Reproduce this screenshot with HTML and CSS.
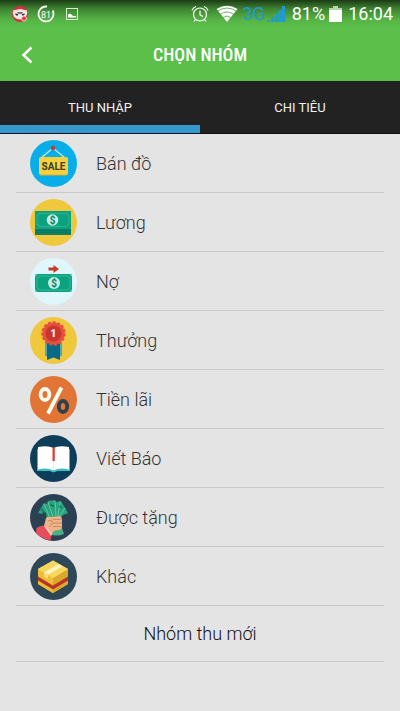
FILE: index.html
```
<!DOCTYPE html>
<html lang="vi">
  <head>
    <meta charset="UTF-8" />
    <meta name="viewport" content="width=device-width, initial-scale=1.0" />
    <title>Chọn nhóm</title>
    <link rel="stylesheet" href="styles.css" />
  </head>
  <body>
    <header class="top">
      <div class="status">
        <div class="status-left">
          <svg width="18" height="18" viewBox="0 0 18 18">
            <circle cx="9" cy="9" r="8" fill="#d5303a" />
            <path d="M1.500 7Q9 3 16.500 7L15 12Q9 17 3 12Z" fill="#f3e9e6" />
            <path d="M2 6Q9 3 16 6" fill="none" stroke="#fff" />
            <path d="M4 8.500l3 .500v1.600H5zM14 8.500l-3 .500v1.600h2z" fill="#333" />
            <path d="M6 7h6l-1 2H7z" fill="#777" />
            <circle cx="13" cy="13.500" r="2.500" fill="#e33d43" stroke="#fff" stroke-width=".7" />
          </svg>
          <svg width="18" height="18" viewBox="0 0 18 18">
            <path d="M6.500 1.900A7.500 7.500 0 1 0 16.500 9L16 5.500" fill="none" stroke="#fff" stroke-width="1.800" />
            <path d="M5 2.600A7.500 7.500 0 0 1 10 1.500" fill="none" stroke="#fff" stroke-width="2" />
            <text x="9" y="12.500" class="small-num" text-anchor="middle">81</text>
          </svg>
          <svg width="18" height="18" viewBox="0 0 18 18">
            <rect x="3.500" y="3.500" width="11" height="11" fill="none" stroke="#d5efcf" />
            <path d="M5 12.500V9.500l2-1 2 1.500 1 1h3v1.500z" fill="#fff" />
          </svg>
        </div>
        <div class="status-right">
          <svg width="18" height="18" viewBox="0 0 18 18" fill="none" stroke="#fff" stroke-width="1.200">
            <circle cx="9" cy="9.500" r="6.500" />
            <path d="M9 5.500v4.500l3 1.500M1 5.500Q2 2.500 5 1.500M17 5.500Q16 2.500 13 1.500M4.500 14.500L3 16.500M13.500 14.500L15 16.500" />
          </svg>
          <svg class="wifi" width="22" height="18" viewBox="0 0 22 18">
            <path d="M11 17L.5 4Q11-2.500 21.500 4Z" fill="#fff" />
            <path d="M1 6.500Q11-.5 21 6.500M4 9.500Q11 4.500 18 9.500M7 12.500Q11 9.500 15 12.500" fill="none" stroke="#4c9f3d" stroke-width=".8" />
          </svg>
          <span class="net">3G</span>
          <svg class="signal" width="18" height="18" viewBox="0 0 18 18" fill="#1e9bd0">
            <path d="M0 15h3v2H0zM4 12h3.500V17H4zM8 8.500h3.200V17H8zM11.600 5h3v12h-3zM15 1h3v16h-3z" />
          </svg>
          <span class="percent">81%</span>
          <svg class="battery" width="13" height="18" viewBox="0 0 13 18">
            <path d="M4 1h5v2h4v2H0V3h4z" fill="#b5d6ad" />
            <path d="M0 5h13v12H0z" fill="#fff" />
          </svg>
          <span>16:04</span>
        </div>
      </div>
      <div class="title-bar">
        <button class="back" type="button" aria-label="Quay lại">
          <svg width="12" height="18" viewBox="0 0 12 18">
            <path d="M10.500 1.500L2.500 9l8 7.500" fill="none" stroke="#fff" stroke-width="2.500" />
          </svg>
        </button>
        <h1>CHỌN NHÓM</h1>
      </div>
    </header>

    <nav class="tabs">
      <button class="tab active" type="button">THU NHẬP</button>
      <button class="tab" type="button">CHI TIÊU</button>
    </nav>

    <main>
      <ul class="groups">
        <li>
          <svg class="icon" viewBox="0 0 47 47">
            <circle cx="23.500" cy="23.500" r="23.500" fill="#08aeea" />
            <path d="M11 18L23 8l12 10" fill="none" stroke="#c9edf5" stroke-width="1.300" />
            <circle cx="23" cy="8" r="2.300" fill="#c0402f" />
            <rect x="9" y="17" width="29" height="18" rx="2" fill="#fad13c" />
            <path d="M10 35h27" stroke="#d5b02e" />
            <text x="23.500" y="30" class="sale" text-anchor="middle">SALE</text>
          </svg>
          <span>Bán đồ</span>
        </li>
        <li>
          <svg class="icon" viewBox="0 0 47 47">
            <circle cx="23.500" cy="23.500" r="23.500" fill="#f0c83e" />
            <rect x="5" y="12" width="36" height="24" fill="#0c8069" />
            <rect x="5" y="12" width="36" height="18" fill="#0ba37f" />
            <path d="M9 14.500h28q0 2 2 2v9q-2 0-2 2H9q0-2-2-2v-9q2 0 2-2z" fill="none" stroke="#38b898" stroke-width=".8" />
            <path d="M5 31.500h36M5 33.500h36" stroke="#0a6d5d" stroke-width=".6" />
            <circle cx="22.500" cy="21" r="5.800" fill="#c4f0e3" />
            <text x="22.500" y="24.500" class="dollar" text-anchor="middle">$</text>
          </svg>
          <span>Lương</span>
        </li>
        <li>
          <svg class="icon" viewBox="0 0 47 47">
            <circle cx="23.500" cy="23.500" r="23.500" fill="#dff6fb" />
            <path d="M18.500 9.500h5V7l5.500 4-5.500 4v-2.500h-5z" fill="#c63a27" />
            <rect x="5" y="16" width="37" height="18" rx="1" fill="#0ba37f" />
            <path d="M9 18h29q0 2 2 2v10q-2 0-2 2H9q0-2-2-2V20q2 0 2-2z" fill="none" stroke="#43bd9e" stroke-width=".8" />
            <path d="M5 19l3-3H5zM42 19l-3-3h3zM5 31l3 3H5zM42 31l-3 3h3z" fill="#6ccab0" />
            <circle cx="24" cy="25" r="6" fill="#c9f0e6" />
            <text x="24" y="28.500" class="dollar" text-anchor="middle">$</text>
          </svg>
          <span>Nợ</span>
        </li>
        <li>
          <svg class="icon" viewBox="0 0 47 47">
            <circle cx="23.500" cy="23.500" r="23.500" fill="#f0c83e" />
            <path d="M15 25h17v14H15z" fill="#56a5b2" />
            <path d="M17 25h13v18l-6.500-2.500L17 43z" fill="#066985" />
            <circle cx="23.500" cy="16.500" r="11" fill="#e8503e" />
            <circle cx="23.500" cy="16.500" r="11" fill="none" stroke="#e8503e" stroke-width="2.500" stroke-dasharray="3 1.600" />
            <circle cx="23.500" cy="16.500" r="8" fill="#c9362f" />
            <text x="23.500" y="20" class="rank" text-anchor="middle">1</text>
          </svg>
          <span>Thưởng</span>
        </li>
        <li>
          <svg class="icon" viewBox="0 0 47 47">
            <circle cx="23.500" cy="23.500" r="23.500" fill="#e07535" />
            <g fill="none" stroke-width="3.800">
              <ellipse cx="15" cy="18.500" rx="4.400" ry="5.500" stroke="#fffaf0" />
              <path d="M31.500 11.500L18 37.500" stroke="#fffaf0" />
              <ellipse cx="33" cy="30.500" rx="4.200" ry="5.500" stroke="#2d4050" />
            </g>
          </svg>
          <span>Tiền lãi</span>
        </li>
        <li>
          <svg class="icon" viewBox="0 0 47 47">
            <circle cx="23.500" cy="23.500" r="23.500" fill="#0d3d59" />
            <path d="M7 14h33v22H27q-3.500 2.500-7 0H7z" fill="#36bec5" />
            <path d="M8 12q10-2 15.500 1v22.500Q17 32 8 34.500zM39 12q-10-2-15.500 1v22.500Q30 32 39 34.500z" fill="#fff" />
            <path d="M23.500 13v22" stroke="#d9e5e8" stroke-width=".7" />
            <path d="M22.500 12.500h2.300V26h-2.300z" fill="#e23b35" />
          </svg>
          <span>Viết Báo</span>
        </li>
        <li>
          <svg class="icon" viewBox="0 0 47 47">
            <circle cx="23.500" cy="23.500" r="23.500" fill="#2c4053" />
            <path d="M8 19l6-10 3 1 1-3 7-1 1 2 5-1 7 12-5 2-4 5H17l-1-7-3-1-1 2z" fill="#28a37e" />
            <path d="M14 10l6 14M18 8l5 15M25 7l1 15M30 8l-2 14M35 14l-6 9" fill="none" stroke="#71ceac" stroke-width=".8" />
            <path d="M11 15l4 4M20 11l4 1M29 12l3 2" stroke="#0e7563" stroke-width="1.500" />
            <path d="M20 34h12l2 6q-8 3-14 0z" fill="#4cae87" />
            <path d="M14 32l2-8q2-2 5-1l9-1q2 1 2 4v7q-1 4-5 3l-3 1-3 4-7-4z" fill="#edb488" />
            <path d="M23 25.500h8M23 29h9M23 32.500h8M18 27l4-1v4l-3 3" fill="none" stroke="#c98562" stroke-width=".9" />
            <path d="M6.500 34q5-3 8-2l7 9-1 5.500Q12 45 6 39z" fill="#e84d5b" />
            <path d="M14 32l3 1 5 7-1 2z" fill="#fac4bb" />
          </svg>
          <span>Được tặng</span>
        </li>
        <li>
          <svg class="icon" viewBox="0 0 47 47">
            <circle cx="23.500" cy="23.500" r="23.500" fill="#2f4858" />
            <path d="M8 16L23 7.500 38 16v15L23 40 8 31z" fill="#f0c744" />
            <path d="M8 16l15 9v15L8 31z" fill="#eebf36" />
            <path d="M38 16l-15 9v15l15-9z" fill="#daa92c" />
            <path d="M8 16L23 7.500 38 16l-15 9z" fill="#f8d760" />
            <path d="M14 19.500L28.500 11l4 2.200L18 21.800z" fill="#fff3bc" />
            <path d="M14 19.500l4 2.300v4l-4-2.200z" fill="#f6dc80" />
            <path d="M8 23.500l15 9 15-9v4l-15 9-15-9z" fill="#b93427" />
          </svg>
          <span>Khác</span>
        </li>
      </ul>
      <button class="new-group" type="button">Nhóm thu mới</button>
    </main>
  </body>
</html>
```
FILE: styles.css
```
* {
  box-sizing: border-box;
}
body {
  margin: 0;
  background: #e4e4e4;
  color: #333;
  font-family: Roboto, "Noto Sans", sans-serif;
}
button {
  border: 0;
  padding: 0;
  background: none;
  color: inherit;
  font-family: inherit;
  cursor: pointer;
}
svg {
  display: block;
  flex: none;
}
.top {
  background: linear-gradient(#1c3b15 0, #3f8532 9px, #56b446 20px, #5bbf4a 28px);
  color: #fff;
}
.status {
  display: flex;
  justify-content: space-between;
  height: 28px;
  padding: 0 7px 0 11px;
}
.status-left,
.status-right {
  display: flex;
  align-items: center;
}
.status-left {
  gap: 8px;
}
.status-right {
  font-size: 18px;
  line-height: 28px;
}
.wifi {
  margin-left: 7px;
}
.net {
  margin-left: 4px;
  color: #1e9bd0;
}
.signal {
  margin-left: 2px;
}
.percent {
  margin-left: 7px;
}
.battery {
  margin: 0 6px 0 4px;
}
.small-num {
  fill: #fff;
  font-size: 9px;
}
.title-bar {
  display: grid;
  grid-template-columns: 54px 1fr 54px;
  align-items: center;
  height: 53px;
}
.back {
  display: flex;
  align-items: center;
  height: 53px;
  padding-left: 21px;
}
h1 {
  margin: 0;
  font-family: "Roboto Condensed", Roboto, sans-serif;
  font-size: 18px;
  font-weight: 500;
  text-align: center;
}

/* tabs */
.tabs {
  display: flex;
  background: #222;
  color: #f2f2f2;
  border-bottom: 1px solid #111;
}
.tab {
  flex: 1;
  height: 52px;
  border-top: 9px solid transparent;
  border-bottom: 8px solid transparent;
  font-size: 13px;
}
.tab.active {
  border-bottom-color: #3498cf;
}

/* list */
main {
  padding: 0 16px;
}
.groups {
  margin: 0;
  padding: 0;
  list-style: none;
}
.groups li {
  display: flex;
  align-items: center;
  gap: 19px;
  height: 59px;
  padding-left: 14px;
  border-bottom: 1px solid #c8c8c8;
  font-size: 18px;
  font-weight: 300;
}
.icon {
  width: 47px;
  height: 47px;
}
.sale {
  fill: #35402f;
  font-size: 10px;
  font-weight: 700;
}
.dollar {
  fill: #087b65;
  font-size: 10px;
  font-weight: 700;
}
.rank {
  fill: #fff;
  font-size: 10px;
  font-weight: 900;
}
.new-group {
  display: block;
  width: 100%;
  height: 56px;
  border-bottom: 1px solid #cacaca;
  color: #111;
  font-size: 18px;
  font-weight: 300;
}
```
